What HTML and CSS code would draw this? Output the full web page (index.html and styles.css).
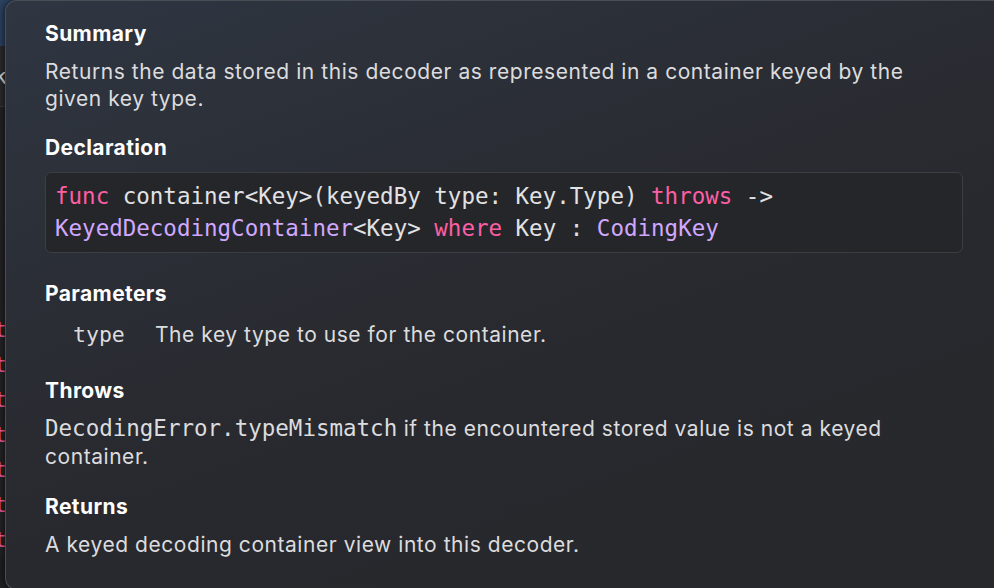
FILE: index.html
```html
<!DOCTYPE html>
<html>
<head>
<meta charset="utf-8">
<link rel="stylesheet" href="styles.css">
</head>
<body>
<div class="editor">
  <div class="ed-line ed-sel"><span>let</span></div>
  <div class="ed-line ed-hl"><span>ok</span></div>
  <div class="ed-gap"></div>
  <div class="ed-line pink"><span>t</span></div>
  <div class="ed-line pink"><span>t</span></div>
  <div class="ed-line pink"><span>t</span></div>
  <div class="ed-line pink"><span>t</span></div>
  <div class="ed-line pink"><span>t</span></div>
  <div class="ed-line pink"><span>t</span></div>
  <div class="ed-line pink"><span>t</span></div>
</div>
<div class="popup">
  <section class="sec">
    <h2>Summary</h2>
    <p>Returns the data stored in this decoder as represented in a container keyed by the given key type.</p>
  </section>
  <section class="sec sec-decl">
    <h2>Declaration</h2>
    <pre class="code"><span class="kw">func</span> container&lt;Key&gt;(keyedBy type: Key.Type) <span class="kw">throws</span> -&gt;
<span class="ty">KeyedDecodingContainer</span>&lt;Key&gt; <span class="kw">where</span> Key : <span class="ty">CodingKey</span></pre>
  </section>
  <section class="sec sec-params">
    <h2>Parameters</h2>
    <div class="param"><code class="pname">type</code><span>The key type to use for the container.</span></div>
  </section>
  <section class="sec">
    <h2>Throws</h2>
    <p class="throws"><code>DecodingError.typeMismatch</code> if the encountered stored value is not a keyed container.</p>
  </section>
  <section class="sec">
    <h2>Returns</h2>
    <p>A keyed decoding container view into this decoder.</p>
  </section>
</div>
</body>
</html>
```
FILE: styles.css
```css
html, body {
  margin: 0;
  padding: 0;
  width: 994px;
  height: 588px;
  overflow: hidden;
}
body {
  background: #1f2023;
  position: relative;
  font-family: "Inter", "Noto Sans", sans-serif;
}
.editor {
  width: 20px;
  height: 588px;
  display: flex;
  flex-direction: column;
}
.ed-line {
  height: 35px;
  display: flex;
  justify-content: flex-end;
  align-items: center;
  overflow: hidden;
  font-family: "DejaVu Sans Mono", monospace;
  font-size: 22px;
  color: #e0e0e0;
  padding-right: 13px;
}
.ed-sel {
  height: 46px;
  background: #2b4260;
  color: #2b4260;
}
.ed-hl {
  height: 60px;
  background: #2b2b2e;
  border-bottom: 1px solid #3a3a3d;
}
.ed-gap {
  height: 205px;
  background: #232326;
}
.pink {
  color: #fc5fa3;
  background: #232326;
}
.popup {
  position: absolute;
  left: 5px;
  top: 0;
  width: 989px;
  height: 590px;
  box-sizing: border-box;
  border: 1px solid #4a4d54;
  border-right: none;
  border-radius: 12px 0 0 12px;
  background: linear-gradient(160deg, #2f3642 0%, #2a2d34 35%, #28292e 60%, #27282c 100%);
  padding: 19px 0 0 39px;
  color: #dcdcde;
  box-shadow: -2px 0 6px rgba(0,0,0,0.5);
}
.sec {
  margin-bottom: 22px;
}
h2 {
  margin: 0 0 11px;
  font-size: 21px;
  line-height: 27px;
  font-weight: 700;
  letter-spacing: 0.4px;
  color: #ffffff;
}
p {
  margin: 0;
  font-size: 21px;
  line-height: 27px;
  letter-spacing: 0.55px;
  width: 885px;
}
.code {
  margin: 0;
  width: 918px;
  box-sizing: border-box;
  border: 1px solid #3d3e44;
  border-radius: 6px;
  background: #25262a;
  padding: 8px 9px;
  font-family: "DejaVu Sans Mono", monospace;
  font-size: 22.5px;
  line-height: 31.5px;
  color: #e2e2e4;
  white-space: pre;
}
.sec-decl {
  margin-bottom: 27px;
}
.kw { color: #fc5fa3; }
.ty { color: #d0a8ff; }
.sec-params {
  margin-bottom: 29px;
}
.sec-params h2 {
  margin-bottom: 14px;
}
.param {
  display: flex;
  font-size: 21px;
  line-height: 27px;
  letter-spacing: 0.55px;
  padding-left: 28px;
}
.pname {
  font-family: "DejaVu Sans Mono", monospace;
  font-size: 21.5px;
  letter-spacing: 0;
  width: 82px;
  color: #dcdcde;
}
.throws {
  line-height: 28px;
}
.throws code {
  font-family: "DejaVu Sans Mono", monospace;
  font-size: 22.5px;
  letter-spacing: 0;
  line-height: 1;
}
```
